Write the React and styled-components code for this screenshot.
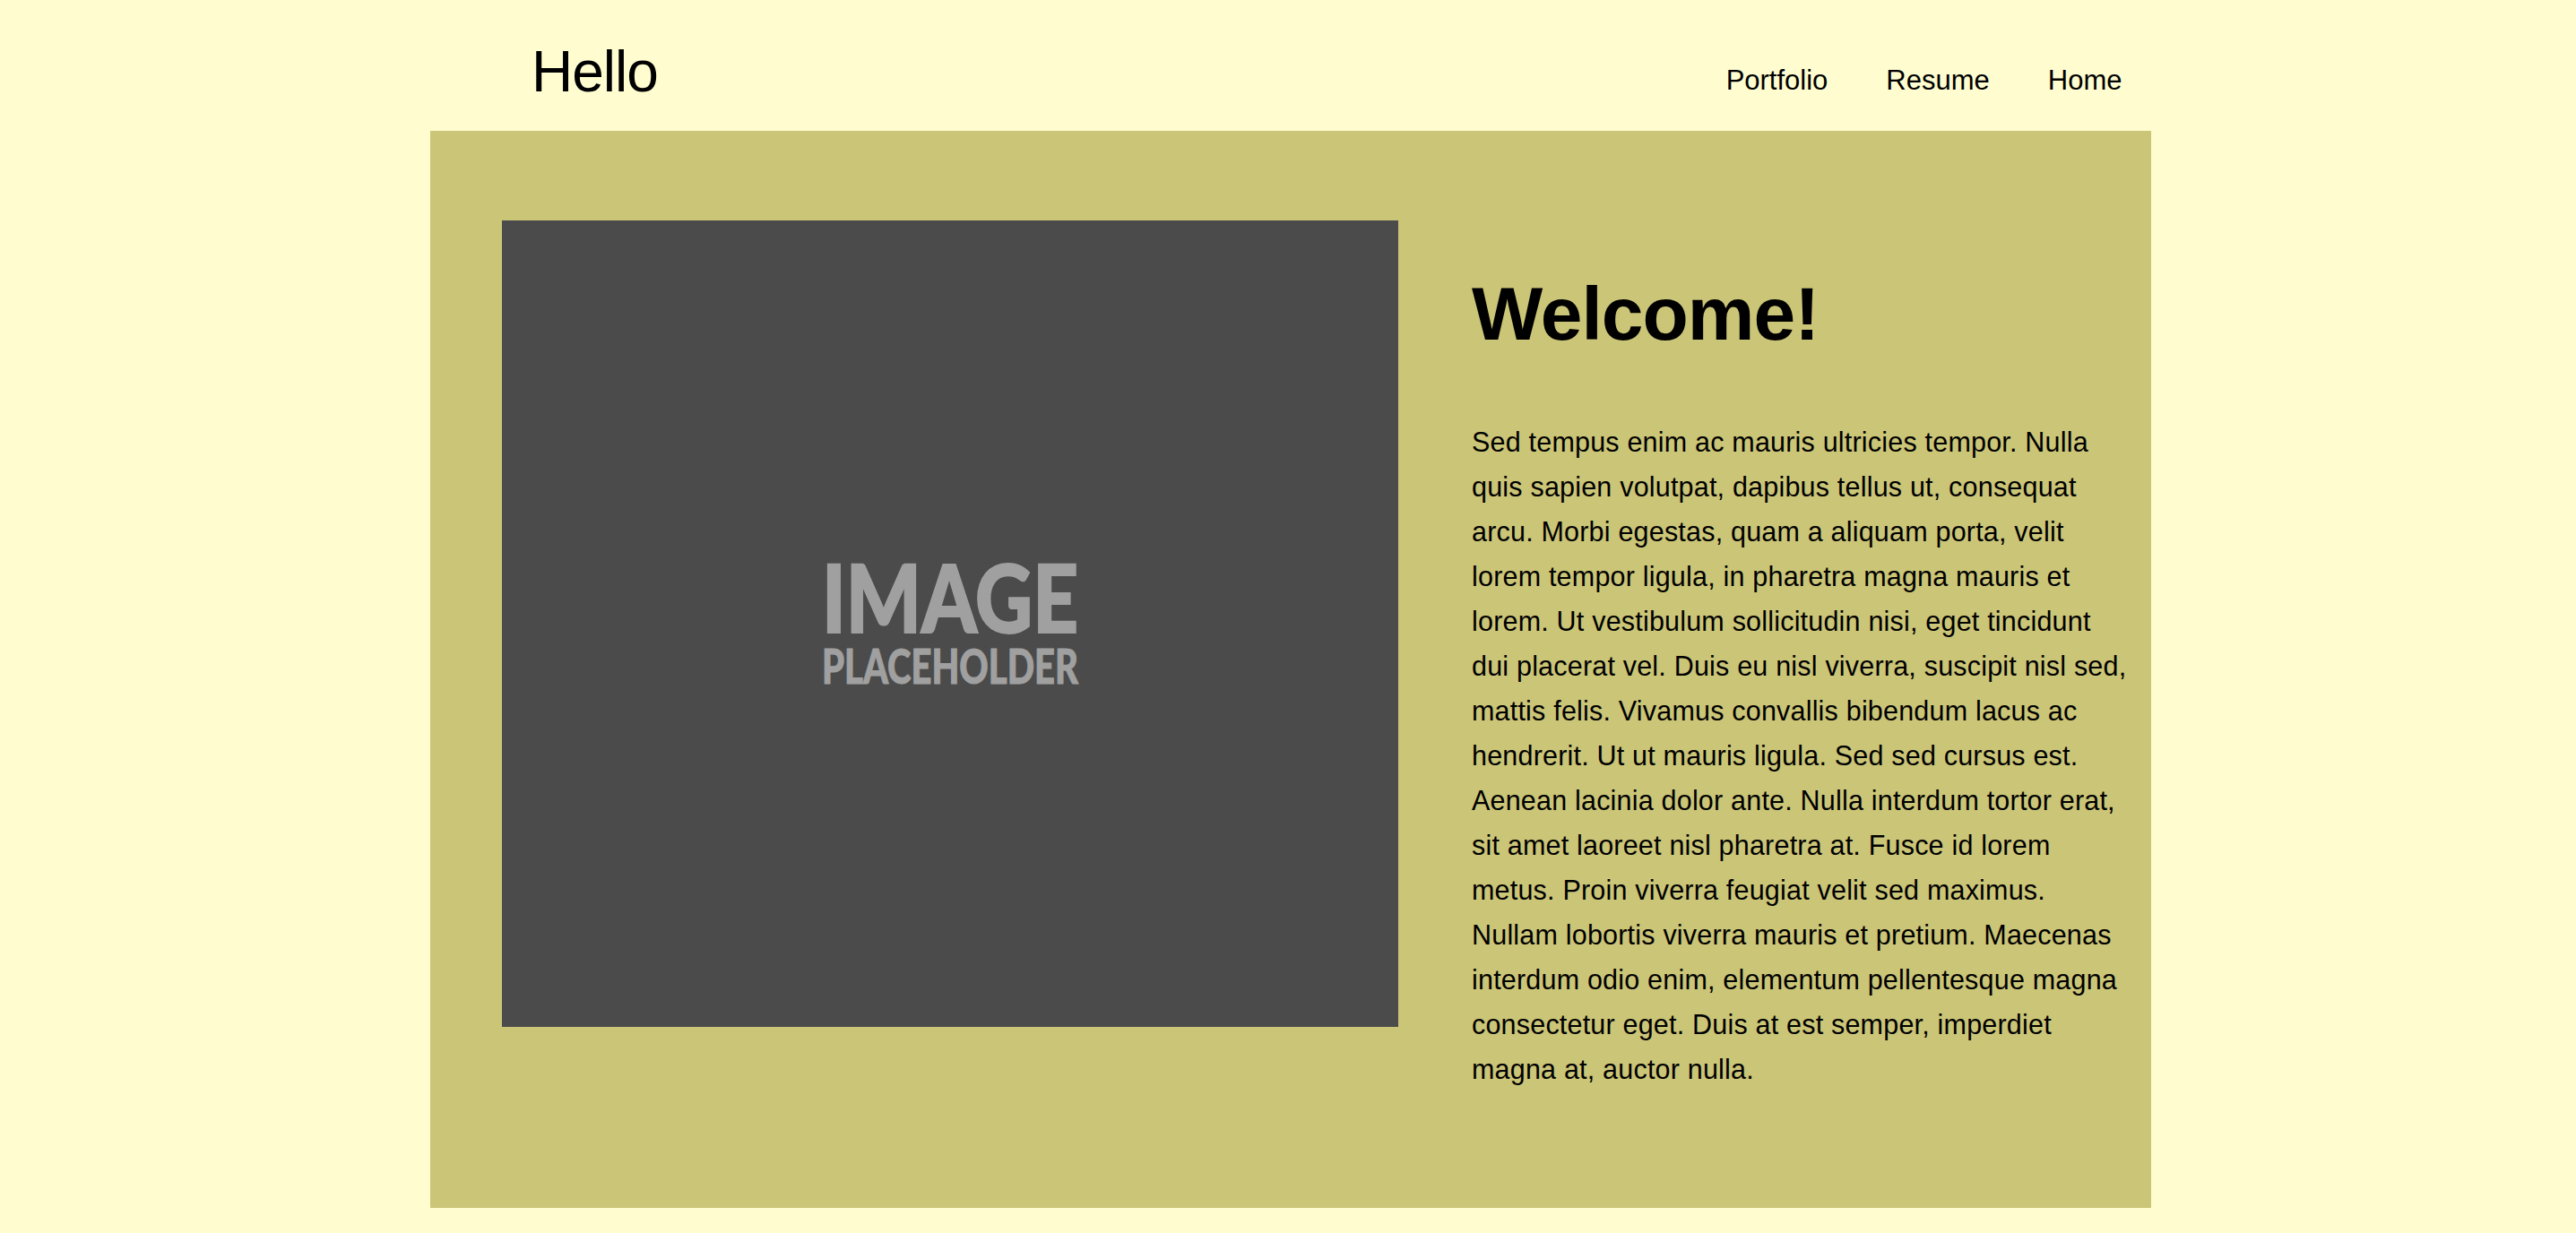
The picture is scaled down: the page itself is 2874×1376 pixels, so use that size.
import React from "react";
import styled, { createGlobalStyle } from "styled-components";

const GlobalStyle = createGlobalStyle`
  html, body {
    margin: 0;
    padding: 0;
    background: #fffdd0;
  }
  body {
    font-family: "Liberation Sans", Arial, Helvetica, sans-serif;
    color: #000;
    min-height: 1376px;
  }
`;

const Page = styled.div`
  width: 1920px;
  margin-left: 480px;
`;

const Header = styled.header`
  height: 146px;
  display: flex;
  justify-content: space-between;
  align-items: flex-start;
`;

const Logo = styled.div`
  font-size: 64px;
  line-height: 1;
  letter-spacing: -1px;
  padding-top: 48px;
  padding-left: 113px;
`;

const Nav = styled.nav`
  display: flex;
  padding-top: 74px;
`;

const NavLink = styled.a`
  font-size: 31px;
  line-height: 1;
  padding: 0 32.5px;
  color: #000;
  text-decoration: none;
`;

const Hero = styled.section`
  display: flex;
  align-items: flex-start;
  gap: 82px;
  background: #cbc577;
  padding: 100px 0 130px 80px;
`;

const Placeholder = styled.div`
  width: 1000px;
  height: 900px;
  flex: none;
  background: #4b4b4b;
  display: flex;
  align-items: center;
  justify-content: center;
`;

const PlaceholderSvg = styled.svg`
  display: block;
  overflow: visible;
`;

const TextColumn = styled.div`
  width: 736px;
  padding-top: 62px;
`;

const Title = styled.h1`
  margin: 0;
  font-size: 84px;
  line-height: 1;
  font-weight: 700;
  letter-spacing: -1px;
`;

const Body = styled.p`
  margin: 76px 0 0;
  font-size: 30.5px;
  letter-spacing: 0.2px;
  line-height: 50px;
`;

function PlaceholderArt() {
  return (
    <PlaceholderSvg width="286" height="140" viewBox="0 0 286 140">
      <text
        x="0"
        y="80"
        fill="#a0a0a0"
        stroke="#a0a0a0"
        strokeWidth="2"
        fontFamily="Lato, 'Open Sans', sans-serif"
        fontWeight="900"
        fontSize="104"
        textLength="286"
        lengthAdjust="spacingAndGlyphs"
      >
        IMAGE
      </text>
      <text
        x="0"
        y="137"
        fill="#a0a0a0"
        stroke="#a0a0a0"
        strokeWidth="1"
        fontFamily="Lato, 'Open Sans', sans-serif"
        fontWeight="900"
        fontSize="53"
        textLength="286"
        lengthAdjust="spacingAndGlyphs"
      >
        PLACEHOLDER
      </text>
    </PlaceholderSvg>
  );
}

export default function App() {
  return (
    <>
      <GlobalStyle />
      <Page>
        <Header>
          <Logo>Hello</Logo>
          <Nav>
            <NavLink href="#">Portfolio</NavLink>
            <NavLink href="#">Resume</NavLink>
            <NavLink href="#">Home</NavLink>
          </Nav>
        </Header>
        <Hero>
          <Placeholder>
            <PlaceholderArt />
          </Placeholder>
          <TextColumn>
            <Title>Welcome!</Title>
            <Body>
              Sed tempus enim ac mauris ultricies tempor. Nulla quis sapien
              volutpat, dapibus tellus ut, consequat arcu. Morbi egestas, quam a
              aliquam porta, velit lorem tempor ligula, in pharetra magna mauris
              et lorem. Ut vestibulum sollicitudin nisi, eget tincidunt dui
              placerat vel. Duis eu nisl viverra, suscipit nisl sed, mattis
              felis. Vivamus convallis bibendum lacus ac hendrerit. Ut ut mauris
              ligula. Sed sed cursus est. Aenean lacinia dolor ante. Nulla
              interdum tortor erat, sit amet laoreet nisl pharetra at. Fusce id
              lorem metus. Proin viverra feugiat velit sed maximus. Nullam
              lobortis viverra mauris et pretium. Maecenas interdum odio enim,
              elementum pellentesque magna consectetur eget. Duis at est semper,
              imperdiet magna at, auctor nulla.
            </Body>
          </TextColumn>
        </Hero>
      </Page>
    </>
  );
}
